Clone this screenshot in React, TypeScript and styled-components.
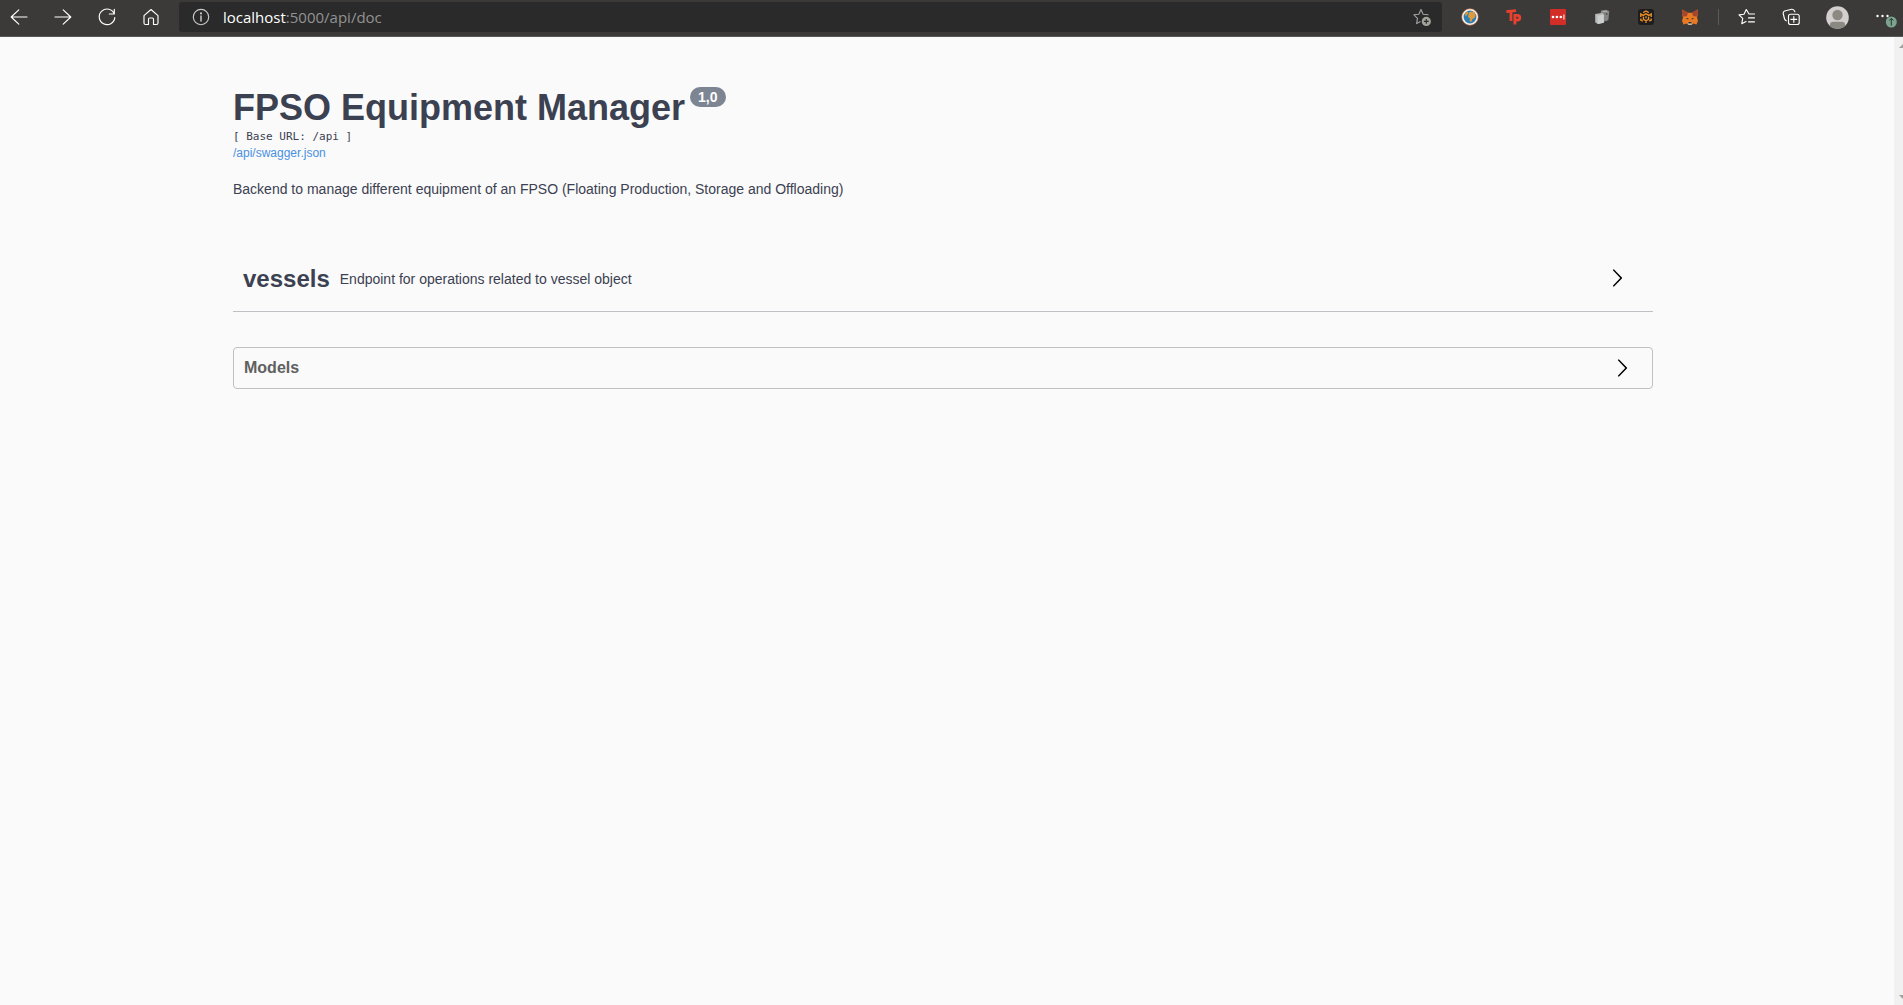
import React from 'react';
import styled, { createGlobalStyle } from 'styled-components';

const GlobalStyle = createGlobalStyle`
  *, *::before, *::after { box-sizing: border-box; }
  body {
    margin: 0;
    background: #fafafa;
    color: #3b4151;
    font-family: "Liberation Sans", Arial, sans-serif;
  }
`;

const Window = styled.div`
  display: flex;
  flex-direction: column;
  min-height: 100vh;
`;

const Toolbar = styled.header`
  display: flex;
  align-items: center;
  gap: 10px;
  height: 37px;
  padding: 0 2px 2px 1px;
  background: #3b3a39;
  border-bottom: 1px solid #5a5958;
`;

const Group = styled.nav`
  display: flex;
  align-items: center;
  gap: 8px;
`;

const IconButton = styled.button`
  display: flex;
  align-items: center;
  justify-content: center;
  width: 36px;
  height: 30px;
  padding: 0;
  border: 0;
  background: none;
  color: #fff;
  cursor: pointer;

  svg { display: block; overflow: visible; }
`;

const AddressBar = styled.div`
  display: flex;
  flex: 1;
  align-items: center;
  height: 30px;
  padding: 0 2px 0 4px;
  border-radius: 3px;
  background: #2a2a2a;
`;

const Address = styled.a`
  flex: 1;
  margin-left: 4px;
  font: 15px/24px "Open Sans", "Noto Sans", sans-serif;
  color: #929292;
  text-decoration: none;
`;

const Host = styled.span`
  color: #fff;
`;

const Divider = styled.span`
  width: 1px;
  height: 16px;
  background: #5c5b5a;
`;

const Viewport = styled.div`
  display: flex;
  flex: 1;
`;

const Page = styled.main`
  flex: 1;
  padding: 50px 28px 50px 20px;
`;

const Content = styled.div`
  max-width: 1420px;
  margin: 0 auto;
`;

const Title = styled.h1`
  display: flex;
  align-items: flex-start;
  gap: 5px;
  margin: 0;
  font-size: 36px;
  line-height: 42px;
`;

const Version = styled.small`
  padding: 0 8px;
  border-radius: 10px;
  background: #7d8492;
  color: #fff;
  font-size: 14px;
  line-height: 20px;
`;

const BaseUrl = styled.pre`
  margin: 0;
  font: 11px/16px "DejaVu Sans Mono", monospace;
`;

const SpecLink = styled.a`
  display: block;
  width: fit-content;
  color: #4990e2;
  font-size: 12px;
  line-height: 16px;
  text-decoration: none;
`;

const Description = styled.p`
  margin: 18px 0 46px;
  font-size: 14px;
  line-height: 20px;
`;

const Heading = styled.h2`
  margin: 0;
`;

const SectionButton = styled.button<{ $boxed?: boolean }>`
  display: flex;
  align-items: center;
  width: 100%;
  margin: 0;
  background: none;
  font-family: inherit;
  text-align: left;
  cursor: pointer;
  border: 0 solid #bfc0c3;
  ${({ $boxed }) =>
    $boxed
      ? `height: 42px; margin-top: 35px; padding: 0 20px 0 10px; border-width: 1px; border-radius: 4px; color: #606060;`
      : `height: 67px; padding: 0 26px 0 10px; border-bottom-width: 1px; color: #3b4151;`}
`;

const TagName = styled.span`
  padding-top: 2px;
  font-size: 24px;
  font-weight: 700;
  line-height: 28px;
`;

const TagText = styled.span`
  flex: 1;
  padding: 2px 10px 0;
  font-size: 14px;
  line-height: 20px;
`;

const ModelsName = styled.span`
  flex: 1;
  font-size: 16px;
  font-weight: 700;
  line-height: 20px;
`;

const ScrollTrack = styled.div`
  display: flex;
  flex-direction: column;
  justify-content: space-between;
  width: 9px;
  padding: 6px 0 5px 5px;
  overflow: hidden;
  background: #f1f1f1;

  svg { display: block; }
`;

const Chevron = () => (
  <svg width="20" height="20" viewBox="0 0 20 20" fill="#000" aria-hidden="true">
    <path d="M13.25 10L6.109 2.58c-.268-.27-.268-.707 0-.979.268-.27.701-.27.969 0l7.83 7.908c.268.271.268.709 0 .979l-7.83 7.908c-.268.271-.701.27-.969 0-.268-.269-.268-.707 0-.979L13.25 10z" />
  </svg>
);

type LineProps = { children: React.ReactNode; color?: string };

const Line = ({ children, color = '#fff' }: LineProps) => (
  <svg width="18" height="18" viewBox="0 0 18 18" fill="none" stroke={color} strokeWidth="1.15" strokeLinecap="round" strokeLinejoin="round" aria-hidden="true">
    {children}
  </svg>
);

const STAR = 'M8 1.5 L10.1 6.2 L15 6.8 M8 1.5 L5.8 6.2 L.9 6.8 L4.5 10.3 L3.6 15.6 L7 13.7';

const navigation = [
  { label: 'Back', art: <Line><path d="M17 9H1.2M8.8 1.8L1.2 9l7.6 7.2" /></Line> },
  { label: 'Forward', art: <Line><path d="M1 9h15.8M9.2 1.8L16.8 9l-7.6 7.2" /></Line> },
  { label: 'Refresh', art: <Line><path d="M16.3 6A7.8 7.8 0 1 0 16.8 9.6M16.3 1.2V6h-5" /></Line> },
  { label: 'Home', art: <Line><path d="M2 7.6L9 1.5l7 6.1V15q0 1.5-1.5 1.5h-3V11q0-1-1-1h-3q-1 0-1 1v5.5h-3Q2 16.5 2 15Z" /></Line> },
];

const Globe = () => (
  <svg width="18" height="18" viewBox="0 0 18 18" aria-hidden="true">
    <circle cx="9" cy="9" r="7.3" fill="#2b7fb5" stroke="#fbeee0" strokeWidth="1.8" />
    <circle cx="9" cy="9" r="8.3" fill="none" stroke="#cf7650" strokeWidth=".5" />
    <path d="M8 4.5l2-1 3 .6 1.6 2.8-.9 3.1-2.2 1-1.5 3.2-1.4-1.4.3-2.6L7 8.9ZM4.5 5l2.3-1.4.5 1.6-1.8 2.4L4 8Z" fill="#e09a3e" />
  </svg>
);

const Monogram = () => (
  <svg width="18" height="18" viewBox="0 0 18 18" fill="none" stroke="#e9412e" strokeWidth="2.8" aria-hidden="true">
    <path d="M1.4 3.7l9.6-1.1M6 3v10" />
    <path d="M9.9 6v10.6M9.9 7.4h2.5q2.4 0 2.4 2.4t-2.4 2.4H9.9" />
  </svg>
);

const PasswordDots = () => (
  <svg width="16" height="16" viewBox="0 0 16 16" aria-hidden="true">
    <rect width="16" height="16" rx="1" fill="#d32d27" />
    <g fill="#fff">
      <circle cx="3" cy="8" r="1.3" />
      <circle cx="6.9" cy="8" r="1.3" />
      <circle cx="10.8" cy="8" r="1.3" />
      <path d="M13.4 5.5h1v5h-1z" />
    </g>
  </svg>
);

const Cubes = () => (
  <svg width="18" height="18" viewBox="0 0 18 18" aria-hidden="true">
    <path d="M8 2.5l5.5-.8 2.8 1.6-1 9-4.6 1.4L7 11Z" fill="#858585" />
    <path d="M9.5 3.8l3.2-.6 1.6.9" stroke="#b7b7b7" fill="none" />
    <circle cx="13.6" cy="6" r="1" fill="#555" />
    <path d="M2.2 6l6.8-1 1.8 1.5v8.3l-6 1.3-2.6-1.8Z" fill="#b8bab9" />
    <path d="M4.6 7.7l6.2-1.2v8.3l-6 1.3Z" fill="#cbcfcd" />
  </svg>
);

const Hive = () => (
  <svg width="16" height="16" viewBox="0 0 16 16" aria-hidden="true">
    <rect width="16" height="16" rx="3" fill="#1d1d20" />
    <g fill="none" stroke="#e88f24" strokeWidth="1.4">
      <path d="M5.2 3.6L8 2l2.8 1.6M2.8 8V5l2.4 1.4L8 4.9l2.8 1.5L13.2 5v3M2.8 9.5v1.6l2 1.1M13.2 9.5v1.6l-2 1.1M5.4 7.7v2.6L8 11.8l2.6-1.5V7.7M8 7.2v2M8 11.8V14" />
    </g>
  </svg>
);

const Fox = () => (
  <svg width="18" height="18" viewBox="0 0 18 18" aria-hidden="true">
    <path d="M1.2 1.5L7 4.8h4l5.8-3.3.2 5-1 3 1 3.3-1.5 3.6-3.2-.8L10.6 17H7.4l-1.7-1.4-3.2.8L1 12.8l1-3.3-1-3Z" fill="#e87a24" />
    <path d="M1.2 1.5L7 4.8 5.8 8.2 2 8.5 1 6.3ZM16.8 1.5L11 4.8l1.2 3.4 3.8.3 1-2.2Z" fill="#a5472d" />
    <path d="M4.6 9.9l2.6.4.2 1.5ZM13.4 9.9l-2.6.4-.2 1.5Z" fill="#3c3029" />
    <path d="M6.6 14.3h4.8l-.8 2.7H7.4Z" fill="#c8b7a7" />
    <path d="M7.4 14h3.2v1.4H7.4Z" fill="#332e2a" />
  </svg>
);

const extensions = [
  { label: 'Globe', art: <Globe /> },
  { label: 'Monogram', art: <Monogram /> },
  { label: 'Passwords', art: <PasswordDots /> },
  { label: 'Cubes', art: <Cubes /> },
  { label: 'Hive', art: <Hive /> },
  { label: 'Fox wallet', art: <Fox /> },
];

const Info = () => (
  <Line color="#c9c9c9">
    <circle cx="9" cy="9" r="7.7" />
    <path d="M9 8v5" strokeWidth="1.5" />
    <circle cx="9" cy="5.4" r=".5" fill="#c9c9c9" />
  </Line>
);

const AddFavorite = () => (
  <Line color="#a3a0a3">
    <path d={STAR} />
    <circle cx="13.3" cy="13.4" r="4.6" fill="#a3a29b" stroke="none" />
    <path d="M13.3 11v4.8M10.9 13.4h4.8" stroke="#2a2a2a" strokeLinecap="butt" />
  </Line>
);

const Favorites = () => (
  <Line>
    <path d="M11 6L8.3 1.5 6 6.2l-5 .7 3.7 3.5-.9 5.3L8 13.6M11 6h5.5M10.5 9.9h6M10.5 13.8h6" />
  </Line>
);

const Collections = () => (
  <Line>
    <rect x="6.5" y="6.2" width="10.7" height="10.3" rx="2" />
    <path d="M11.8 8.5v5.8M8.9 11.4h5.8M4.3 12.8Q3 12.3 2.5 10.8L1.2 5.5Q.9 3.7 2.6 3l7-1.7q1.8-.2 2.6 1.2l.7 1.2" />
  </Line>
);

const Avatar = () => (
  <svg width="23" height="23" viewBox="0 0 23 23" aria-hidden="true">
    <clipPath id="avatar-disc"><circle cx="11.5" cy="11.5" r="11.3" /></clipPath>
    <circle cx="11.5" cy="11.5" r="11.3" fill="#d3cfce" />
    <g clipPath="url(#avatar-disc)" fill="#8b8982">
      <circle cx="11.5" cy="9" r="5.2" />
      <path d="M4 19q0-3.3 3.3-3.3h8.4q3.3 0 3.3 3.3v4H4Z" />
    </g>
  </svg>
);

const More = () => (
  <svg width="30" height="20" viewBox="0 0 30 20" aria-hidden="true">
    <g fill="#fff">
      <circle cx="9.5" cy="9" r="1.2" />
      <circle cx="14.5" cy="9" r="1.2" />
      <circle cx="19.5" cy="9" r="1.2" />
    </g>
    <circle cx="23.3" cy="15" r="5.5" fill="#7ba38d" />
    <path d="M23.3 18.5v-7M21.3 13.4l2-2 2 2" fill="none" stroke="#26352d" />
  </svg>
);

export default function App() {
  return (
    <Window>
      <GlobalStyle />
      <Toolbar>
        <Group aria-label="Navigation">
          {navigation.map(({ label, art }) => (
            <IconButton key={label} aria-label={label}>{art}</IconButton>
          ))}
        </Group>
        <AddressBar>
          <IconButton aria-label="Site information"><Info /></IconButton>
          <Address href="#"><Host>localhost</Host>:5000/api/doc</Address>
          <IconButton aria-label="Add to favorites"><AddFavorite /></IconButton>
        </AddressBar>
        <Group aria-label="Extensions">
          {extensions.map(({ label, art }) => (
            <IconButton key={label} aria-label={label}>{art}</IconButton>
          ))}
        </Group>
        <Divider />
        <Group aria-label="Saved pages">
          <IconButton aria-label="Favorites"><Favorites /></IconButton>
          <IconButton aria-label="Collections"><Collections /></IconButton>
        </Group>
        <IconButton aria-label="Profile"><Avatar /></IconButton>
        <IconButton aria-label="Settings and more"><More /></IconButton>
      </Toolbar>
      <Viewport>
        <Page>
          <Content>
            <Title>FPSO Equipment Manager<Version>1,0</Version></Title>
            <BaseUrl>[ Base URL: /api ]</BaseUrl>
            <SpecLink href="#">/api/swagger.json</SpecLink>
            <Description>
              Backend to manage different equipment of an FPSO (Floating Production, Storage and Offloading)
            </Description>
            <Heading>
              <SectionButton aria-expanded={false}>
                <TagName>vessels</TagName>
                <TagText>Endpoint for operations related to vessel object</TagText>
                <Chevron />
              </SectionButton>
            </Heading>
            <Heading>
              <SectionButton $boxed aria-expanded={false}>
                <ModelsName>Models</ModelsName>
                <Chevron />
              </SectionButton>
            </Heading>
          </Content>
        </Page>
        <ScrollTrack aria-hidden="true">
          <svg width="8" height="5" viewBox="0 0 8 5" fill="#a3a09c"><path d="M0 5L4 1l4 4Z" /></svg>
          <svg width="8" height="5" viewBox="0 0 8 5" fill="#a3a09c"><path d="M0 0l4 4 4-4Z" /></svg>
        </ScrollTrack>
      </Viewport>
    </Window>
  );
}
